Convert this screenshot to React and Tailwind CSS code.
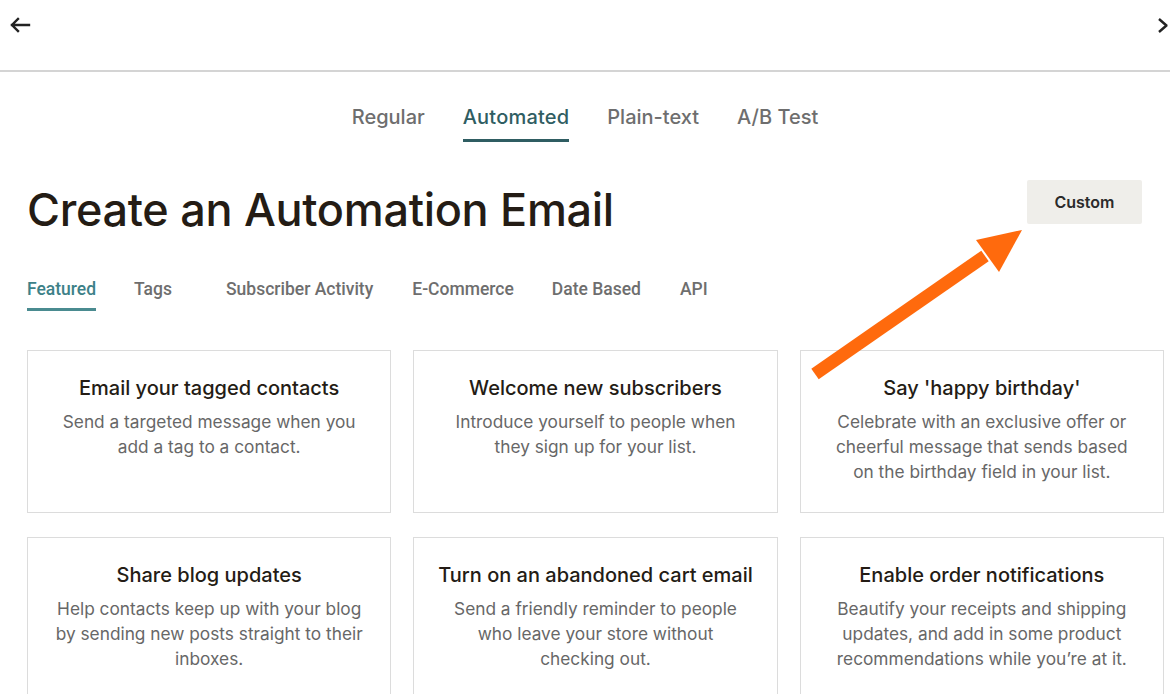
import React from "react";

const cards = [
  { t: "Email your tagged contacts", d: ["Send a targeted message when you", "add a tag to a contact."] },
  { t: "Welcome new subscribers", d: ["Introduce yourself to people when", "they sign up for your list."] },
  { t: "Say 'happy birthday'", d: ["Celebrate with an exclusive offer or", "cheerful message that sends based", "on the birthday field in your list."] },
  { t: "Share blog updates", d: ["Help contacts keep up with your blog", "by sending new posts straight to their", "inboxes."] },
  { t: "Turn on an abandoned cart email", d: ["Send a friendly reminder to people", "who leave your store without", "checking out."] },
  { t: "Enable order notifications", d: ["Beautify your receipts and shipping", "updates, and add in some product", "recommendations while you\u2019re at it."] },
];

export default function App() {
  return (
    <div className="relative w-[1170px] h-[694px] overflow-hidden bg-white" style={{ fontFamily: "Inter, 'Open Sans', sans-serif" }}>
      <header className="h-[72px] border-b-2 border-[#d4d4d4] flex items-start justify-between pl-[9px] pt-[17px]">
        <svg width="22" height="16" viewBox="0 0 22 16">
          <path d="M20 8H3M9 2L3 8l6 6" stroke="#222" strokeWidth="2.4" fill="none" strokeLinecap="square" />
        </svg>
        <svg width="14" height="16" viewBox="0 0 14 16">
          <path d="M3 2l8 7M3 15l8-7" stroke="#222" strokeWidth="2.4" fill="none" />
        </svg>
      </header>

      <nav className="flex justify-center gap-[38px] mt-[30px] text-[20px] font-medium text-[#6e6e6e]">
        <span className="pb-[7px] border-b-[3px] border-transparent">Regular</span>
        <span className="pb-[7px] border-b-[3px] border-[#2f5d62] text-[#2f5d62] tracking-[0.2px]">Automated</span>
        <span className="pb-[7px] border-b-[3px] border-transparent">Plain-text</span>
        <span className="pb-[7px] border-b-[3px] border-transparent">A/B Test</span>
      </nav>

      <div className="flex items-start justify-between pl-[27px] pr-[28px] mt-[40px]">
        <h1 className="text-[45px] leading-[60px] font-medium text-[#241c15] tracking-[-0.3px] -mt-[2px]">Create an Automation Email</h1>
        <button className="w-[115px] h-[44px] bg-[#efeeea] text-[16px] font-semibold text-[#2b2b2b] rounded-[2px] -mt-[2px]">Custom</button>
      </div>

      <div className="flex pl-[27px] mt-[38px] text-[17.5px] leading-[22px] text-[#6e6e6e]" style={{ fontFamily: "Roboto, 'Liberation Sans', sans-serif" }}>
        <span className="pb-[8px] border-b-[3px] border-[#4a8b90] text-[#3d8188] font-medium mr-[38px]">Featured</span>
        <span className="pb-[8px] border-b-[3px] border-transparent font-medium mr-[54px]">Tags</span>
        <span className="pb-[8px] border-b-[3px] border-transparent font-medium mr-[39px]">Subscriber Activity</span>
        <span className="pb-[8px] border-b-[3px] border-transparent font-medium mr-[38px]">E-Commerce</span>
        <span className="pb-[8px] border-b-[3px] border-transparent font-medium mr-[39px]">Date Based</span>
        <span className="pb-[8px] border-b-[3px] border-transparent font-medium">API</span>
      </div>

      <div className="grid grid-cols-3 gap-x-[22px] gap-y-[24px] pl-[27px] pr-[6px] mt-[39px]">
        {cards.map((c) => (
          <div key={c.t} className="h-[163px] border border-[#dcdcdc] flex flex-col items-center pt-[24px] text-center">
            <div className="text-[20px] leading-[26px] font-medium text-[#241c15]">{c.t}</div>
            <div className="mt-[8px] text-[17.3px] leading-[25px] text-[#676767]">
              {c.d.map((l) => (
                <div key={l}>{l}</div>
              ))}
            </div>
          </div>
        ))}
      </div>

      <svg className="absolute left-0 top-0 pointer-events-none" width="1170" height="694">
        <line x1="815" y1="374" x2="985" y2="256" stroke="#ff6a0d" strokeWidth="13" />
        <polygon points="1022,230 976,240 999,272" fill="#ff6a0d" />
      </svg>
    </div>
  );
}
